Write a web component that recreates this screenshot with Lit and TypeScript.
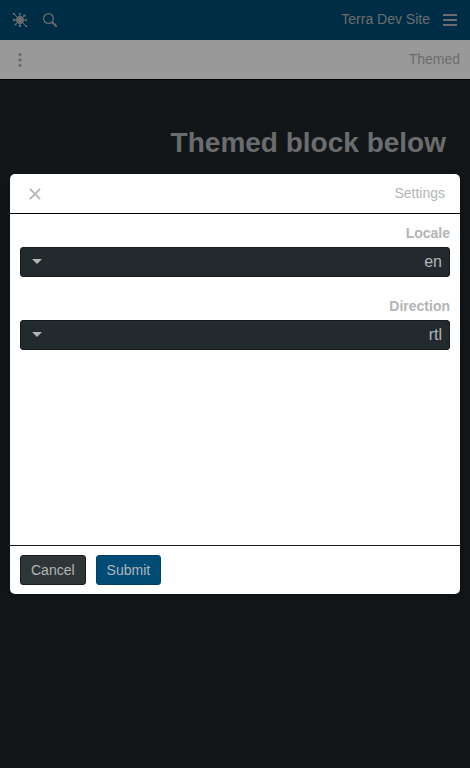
import { LitElement, html, css } from "lit";
import { customElement, property } from "lit/decorators.js";

@customElement("select-field")
class SelectField extends LitElement {
  @property() label = "";
  @property() value = "";
  static styles = css`
    :host { display: block; height: 73px; }
    .label { font-weight: bold; font-size: 14px; line-height: 20px; height: 24px; }
    .select {
      box-sizing: border-box; height: 30px; border: 1px solid #181b1d; border-radius: 3px;
      background: #222a2d; display: flex; align-items: center; justify-content: space-between;
      padding: 0 7px 0 11px; font-size: 16px; line-height: 28px;
    }
    svg { display: block; margin-bottom: 1px; }
  `;
  render() {
    return html`<div class="label">${this.label}</div>
      <div class="select" dir="rtl">
        <span>${this.value}</span>
        <svg width="10" height="5" viewBox="0 0 10 5"><path d="M0 0h10L5 5z" fill="#b2b5b6"/></svg>
      </div>`;
  }
}

@customElement("app-root")
class AppRoot extends LitElement {
  static styles = css`
    :host {
      display: block; position: relative; height: 768px; overflow: hidden; background: #1e2528;
      font-family: "Liberation Sans", Arial, sans-serif; font-size: 14px; color: #b2b5b6;
    }
    * { box-sizing: border-box; }
    svg { display: block; }
    .top { height: 40px; background: #004c76; display: flex; align-items: center; padding: 0 13px; }
    .search { margin-left: 16px; }
    .brand { margin-left: auto; margin-right: 13px; line-height: 20px; padding-bottom: 2px; }
    .sub {
      height: 40px; background: #fff; border-bottom: 1px solid #000; display: flex;
      align-items: center; justify-content: space-between; padding: 0 10px 0 18px;
    }
    .title { padding-bottom: 2px; }
    h1 { margin: 0; padding: 46px 24px 0; font-size: 28px; line-height: 34px; text-align: right; }
    .overlay { position: absolute; inset: 0; background: rgba(0, 0, 0, 0.4); }
    .modal {
      position: absolute; left: 10px; right: 10px; top: 174px; height: 420px; border-radius: 5px;
      background: #fff; display: flex; flex-direction: column; overflow: hidden;
      box-shadow: 0 2px 8px rgba(0, 0, 0, 0.3);
    }
    .head {
      height: 40px; border-bottom: 1px solid #000; display: flex; align-items: center;
      justify-content: space-between; padding: 0 15px 0 19px;
    }
    .body { flex: 1; padding: 9px 10px; text-align: right; }
    .foot { height: 49px; border-top: 1px solid #181b1d; display: flex; gap: 10px; padding: 9px 10px; }
    button {
      height: 30px; padding: 0 10px; border: 1px solid #181b1d; border-radius: 3px;
      background: #2f3638; color: #b2b5b6; font: inherit; line-height: 28px;
    }
    .submit { background: #004c76; border-color: #004166; }
  `;
  render() {
    return html`
      <div class="top">
        <svg width="14" height="14" viewBox="0 0 14 14" fill="#b2b5b6" stroke="#b2b5b6">
          <circle cx="7" cy="7" r="3.9" stroke="none"/>
          <path d="M7 7V.5M7 7v6.3M7 7H.3M7 7h6.2M7 7L1.2 1.2M7 7l4.5-4.5M7 7l6 6M7 7l-4.5 4.5" stroke-width="1"/>
          <g stroke="none"><circle cx="1" cy="1" r="1.1"/><circle cx="11.4" cy="2.6" r="1.2"/><circle cx="13" cy="13" r="1.1"/><circle cx="2.5" cy="11.5" r="1"/><circle cx="1" cy="7" r="1.2"/><circle cx="7" cy="13" r="1.2"/><circle cx="7" cy=".8" r=".9"/><circle cx="13.2" cy="7" r=".9"/></g>
        </svg>
        <svg class="search" width="14" height="14" viewBox="0 0 14 14" fill="none" stroke="#b2b5b6" stroke-width="1.2">
          <circle cx="5.5" cy="5.5" r="4.9"/><path d="M9 9l1.2 1.2"/><path d="M10 10l3 3" stroke-width="2" stroke-linecap="round"/>
        </svg>
        <span class="brand">Terra Dev Site</span>
        <svg width="14" height="12" viewBox="0 0 14 12" fill="#b2b5b6"><path d="M0 0h14v2H0zM0 5h14v2H0zM0 10h14v2H0z"/></svg>
      </div>
      <div class="sub">
        <svg width="4" height="14" viewBox="0 0 4 14" fill="#b2b5b6"><circle cx="2" cy="1.6" r="1.7"/><circle cx="2" cy="7" r="1.7"/><circle cx="2" cy="12.4" r="1.7"/></svg>
        <span class="title">Themed</span>
      </div>
      <h1>Themed block below</h1>
      <div class="overlay"></div>
      <div class="modal">
        <div class="head">
          <svg width="12" height="12" viewBox="0 0 12 12" stroke="#b2b5b6" stroke-width="1.8" stroke-linecap="round"><path d="M1.4 1.4l9.2 9.2M10.6 1.4l-9.2 9.2"/></svg>
          <span class="title">Settings</span>
        </div>
        <div class="body">
          <select-field label="Locale" value="en"></select-field>
          <select-field label="Direction" value="rtl"></select-field>
        </div>
        <div class="foot"><button>Cancel</button><button class="submit">Submit</button></div>
      </div>`;
  }
}
